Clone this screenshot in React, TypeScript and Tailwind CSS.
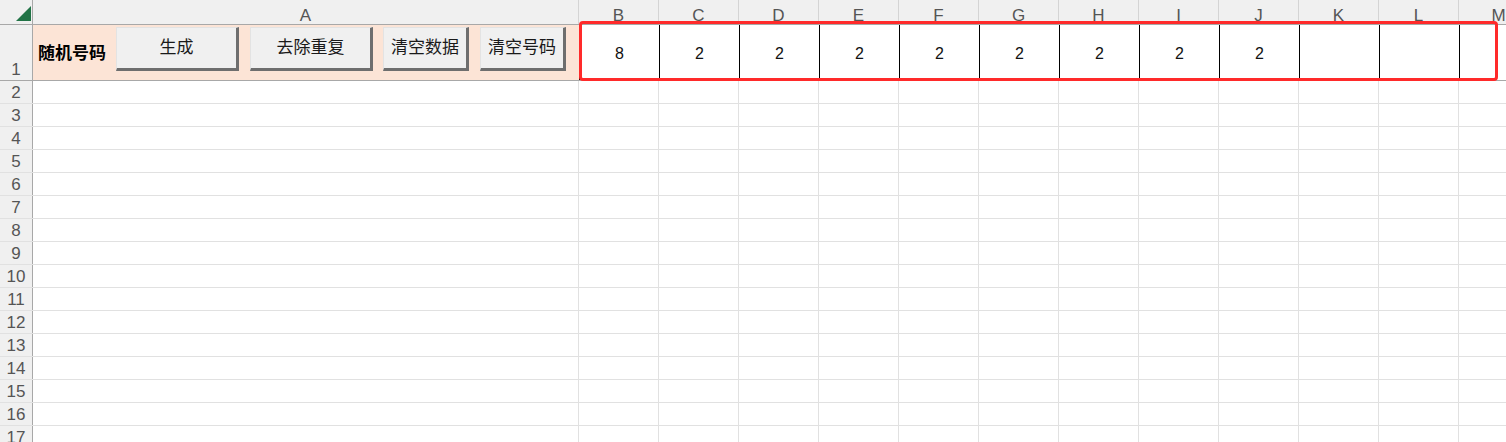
import React from 'react';

const COLS = ['B', 'C', 'D', 'E', 'F', 'G', 'H', 'I', 'J', 'K', 'L', 'M'];
const VALUES = ['8', '2', '2', '2', '2', '2', '2', '2', '2', '', '', ''];
const ROWS = Array.from({ length: 16 }, (_, i) => i + 2);

const FONT = "font-['Liberation_Sans','Noto_Sans_CJK_SC',sans-serif]";

function SheetButton({ label, width }: { label: string; width: string }) {
  return (
    <button
      className={`${width} h-[44px] shrink-0 bg-[#f0f0f0] border-t border-l border-t-[#e3e3e3] border-l-[#e3e3e3] border-b-[3px] border-r-[3px] border-b-[#6e6e6e] border-r-[#6e6e6e] text-[17px] text-[#1a1a1a] flex items-center justify-center pb-[1px]`}
    >
      {label}
    </button>
  );
}

export default function App() {
  return (
    <div className={`relative w-[1506px] h-[442px] overflow-hidden bg-white ${FONT}`}>
      {/* column headers */}
      <div className="flex h-[25px] bg-[#f0f0f0] border-b border-[#a8a8a8]">
        <div className="w-[33px] shrink-0 border-r border-[#a8a8a8] relative">
          <svg width="15" height="15" viewBox="0 0 15 15" className="absolute left-[16px] top-[6px]">
            <polygon points="15,0 15,15 0,15" fill="#217346" />
          </svg>
        </div>
        <div className="w-[546px] shrink-0 border-r border-[#d4d4d4] text-center text-[17px] leading-[32px] text-[#555]">A</div>
        {COLS.map(c => (
          <div key={c} className="w-[80px] shrink-0 border-r border-[#d4d4d4] text-center text-[17px] leading-[32px] text-[#555]">
            {c}
          </div>
        ))}
      </div>

      {/* row 1 */}
      <div className="flex h-[56px] border-b border-[#a8a8a8]">
        <div className="w-[33px] shrink-0 bg-[#f0f0f0] border-r border-[#a8a8a8] flex items-end justify-center text-[17px] leading-[20px] text-[#555]">1</div>
        <div className="w-[546px] shrink-0 bg-[#fce4d6] flex items-start pt-[2px]">
          <span className="w-[83px] shrink-0 pl-[5px] self-center text-[17px] font-bold text-black">随机号码</span>
          <SheetButton label="生成" width="w-[123px]" />
          <div className="w-[11px] shrink-0" />
          <SheetButton label="去除重复" width="w-[123px]" />
          <div className="w-[10px] shrink-0" />
          <SheetButton label="清空数据" width="w-[86px]" />
          <div className="w-[11px] shrink-0" />
          <SheetButton label="清空号码" width="w-[86px]" />
        </div>
        {VALUES.map((v, i) => (
          <div
            key={i}
            className="w-[80px] shrink-0 border-l border-black flex items-center justify-center text-[16px] text-[#111] pt-[2px]"
          >
            {v}
          </div>
        ))}
      </div>

      {/* rows 2-17 */}
      {ROWS.map(r => (
        <div key={r} className="flex h-[23px] border-b border-[#e1e1e1]">
          <div className="w-[33px] shrink-0 bg-[#f0f0f0] border-r border-[#a8a8a8] text-center text-[17px] leading-[23px] text-[#555]">
            {r}
          </div>
          <div className="w-[546px] shrink-0 border-r border-[#e1e1e1]" />
          {COLS.map(c => (
            <div key={c} className="w-[80px] shrink-0 border-r border-[#e1e1e1]" />
          ))}
        </div>
      ))}

      {/* highlight frame */}
      <div className="absolute left-[579px] top-[21px] w-[919px] h-[60px] border-[3px] border-[#ff2a2a] rounded-[4px] pointer-events-none" />
    </div>
  );
}
